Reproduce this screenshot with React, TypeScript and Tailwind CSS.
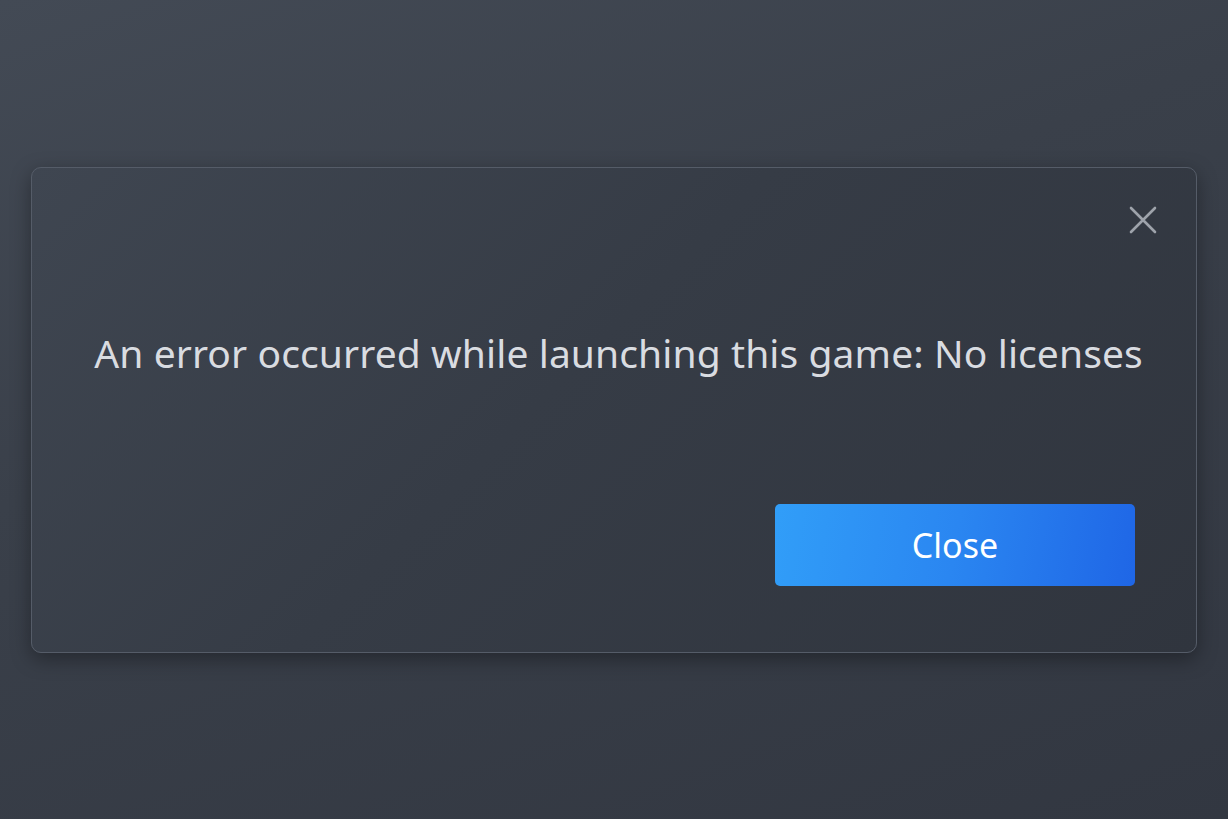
export default function App() {
  return (
    <div
      className="w-[1228px] h-[819px] flex flex-col bg-[linear-gradient(160deg,#434a55_0%,#3a404a_40%,#323741_100%)] pt-[167px] px-[31px]"
      style={{ fontFamily: '"Noto Sans", "Open Sans", sans-serif' }}
    >
      <div className="w-[1166px] h-[486px] rounded-[10px] border border-[#555c68] bg-[linear-gradient(135deg,#3f4651_0%,#363c46_45%,#30353e_100%)] shadow-[0_6px_20px_rgba(0,0,0,0.35)] flex flex-col">
        <div className="flex justify-end pt-[38px] pr-[39px] h-[80px]">
          <svg width="28" height="28" viewBox="0 0 28 28" className="text-[#9ea3ab]">
            <path d="M2 2 L26 26 M26 2 L2 26" stroke="currentColor" strokeWidth="2.6" strokeLinecap="round" />
          </svg>
        </div>
        <div className="flex justify-center pt-[80px] pl-[9px]">
          <p className="text-[#d9dce1] text-[39px] leading-[50px] tracking-[0.1px] whitespace-nowrap">
            An error occurred while launching this game: No licenses
          </p>
        </div>
        <div className="flex justify-end pr-[61px] pt-[126px]">
          <button className="w-[360px] h-[82px] rounded-[5px] bg-[linear-gradient(100deg,#319ef8_0%,#2a86f1_50%,#1f66e6_100%)] text-white text-[34px] flex items-center justify-center">
            Close
          </button>
        </div>
      </div>
    </div>
  );
}
